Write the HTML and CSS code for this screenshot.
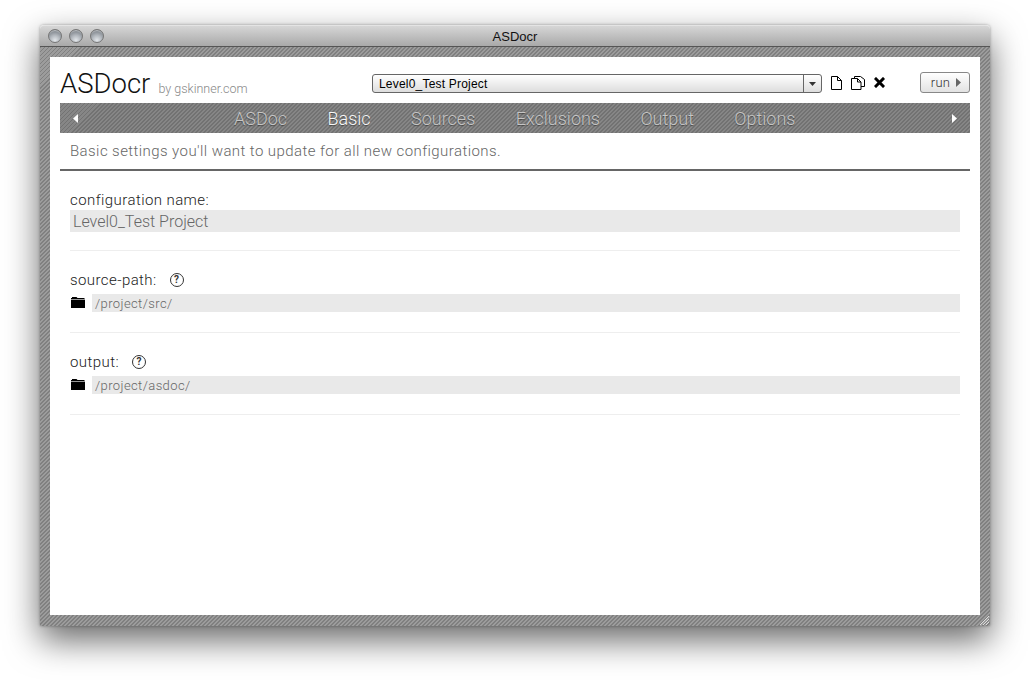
FILE: index.html
```html
<!DOCTYPE html>
<html lang="en">
<head>
<meta charset="utf-8">
<title>ASDocr</title>
<link rel="stylesheet" href="styles.css">
</head>
<body>
<div class="window">
  <div class="titlebar">
    <div class="lights"><span class="light"></span><span class="light"></span><span class="light"></span></div>
    <div class="wintitle">ASDocr</div>
  </div>
  <div class="frame">
    <div class="content">
      <header class="head">
        <div class="brand"><span class="logo">ASDocr</span><span class="by">by gskinner.com</span></div>
        <div class="tools">
          <div class="combo"><span class="combo-text">Level0_Test Project</span><span class="combo-btn"><svg width="7" height="4" viewBox="0 0 7 4"><path d="M0 0h7L3.500 4z" fill="#333"/></svg></span></div>
          <svg class="tool-new" width="11" height="14" viewBox="0 0 11 14"><path d="M.5.5h6l4 4v9H.5z" fill="#fff" stroke="#000"/><path d="M6.500.5v4h4" fill="none" stroke="#000"/></svg>
          <svg class="tool-copy" width="14" height="14" viewBox="0 0 14 14"><path d="M.5 2.500h6l3.500 3.500v7.500H.5z" fill="#fff" stroke="#000"/><path d="M6.500 2.500V6H10" fill="none" stroke="#000"/><path d="M3.500 2.500V.5h6l4 3v7H10" fill="none" stroke="#000"/></svg>
          <svg class="tool-del" width="11" height="11" viewBox="0 0 11 11"><path d="M2 2l7 7M9 2l-7 7" stroke="#000" stroke-width="3" stroke-linecap="square" fill="none"/></svg>
          <button class="run">run<svg width="5" height="9" viewBox="0 0 5 9"><path d="M0 0l5 4.500L0 9z" fill="#666"/></svg></button>
        </div>
      </header>
      <nav class="tabs">
        <svg class="arrow" width="5" height="9" viewBox="0 0 5 9"><path d="M5 0L0 4.500 5 9z" fill="#fff"/></svg>
        <div class="tablist">
          <span class="tab">ASDoc</span><span class="tab active">Basic</span><span class="tab">Sources</span><span class="tab">Exclusions</span><span class="tab">Output</span><span class="tab">Options</span>
        </div>
        <svg class="arrow" width="5" height="9" viewBox="0 0 5 9"><path d="M0 0l5 4.500L0 9z" fill="#fff"/></svg>
      </nav>
      <p class="desc">Basic settings you'll want to update for all new configurations.</p>
      <section class="fields">
        <div class="field first">
          <div class="label">configuration name:</div>
          <div class="input big">Level0_Test Project</div>
        </div>
        <div class="field">
          <div class="label">source-path:<span class="help">?</span></div>
          <div class="pathrow">
            <svg class="folder" width="14" height="12" viewBox="0 0 14 12"><path d="M0 2h1V1h4.500l1 1H13l1 1v9H0z" fill="#000"/><path d="M0 3.500h14" stroke="#fff" stroke-width=".6"/></svg>
            <div class="input small">/project/src/</div>
          </div>
        </div>
        <div class="field">
          <div class="label">output:<span class="help">?</span></div>
          <div class="pathrow">
            <svg class="folder" width="14" height="12" viewBox="0 0 14 12"><path d="M0 2h1V1h4.500l1 1H13l1 1v9H0z" fill="#000"/><path d="M0 3.500h14" stroke="#fff" stroke-width=".6"/></svg>
            <div class="input small">/project/asdoc/</div>
          </div>
        </div>
      </section>
    </div>
    <svg class="grip" width="10" height="10" viewBox="0 0 10 10"><path d="M10 1L1 10M10 4l-6 6M10 7l-3 3" stroke="#ddd" fill="none"/></svg>
  </div>
</div>
</body>
</html>
```
FILE: styles.css
```css
* { box-sizing: border-box; }
html, body { margin: 0; height: 100%; background: #fff; overflow: hidden; }
body { padding: 25px 40px 0; font-family: Roboto, "Liberation Sans", Arial, sans-serif; font-weight: 300; }
.window {
  width: 950px; height: 601px;
  display: flex; flex-direction: column;
  border-radius: 4px 4px 0 0;
  box-shadow: 0 14px 34px rgba(0,0,0,.6), 0 0 3px rgba(0,0,0,.35);
}
.titlebar {
  height: 22px; flex: none;
  display: flex; align-items: center; position: relative;
  background: linear-gradient(#d6d6d6, #a9a9a9);
  border-top: 1px solid #e4e4e4;
  border-bottom: 1px solid #555;
  border-radius: 4px 4px 0 0;
}
.lights { display: flex; gap: 7px; margin-left: 8px; }
.light {
  width: 14px; height: 14px; border-radius: 50%;
  border: 1px solid #777;
  background: radial-gradient(circle at 50% 85%, #e2e6ea 0, #b4b9bf 40%, #7f858c 80%), #999;
  box-shadow: inset 0 2px 1px -1px rgba(255,255,255,.5);
}
.wintitle {
  position: absolute; left: 0; right: 0; top: 3px;
  font-family: "Liberation Sans", Arial, sans-serif; font-weight: 400;
  text-align: center; font-size: 13px; line-height: 16px; color: #111;
}
.frame {
  flex: 1; min-height: 0; position: relative;
  padding: 10px 10px 11px;
  background: repeating-linear-gradient(135deg, #808080 0, #808080 1.4px, #9c9c9c 1.4px, #9c9c9c 2.83px);
}
.content {
  height: 100%; background: #fff; padding: 0 10px;
  display: flex; flex-direction: column;
}
.head { height: 46px; flex: none; display: flex; align-items: flex-end; justify-content: space-between; }
.brand { display: flex; align-items: baseline; margin-bottom: 3px; }
.logo { font-size: 27.5px; line-height: 32px; color: #111; }
.by { font-size: 12.5px; color: #888; margin-left: 8px; }
.tools { display: flex; align-items: flex-start; height: 21px; margin-bottom: 10px; }
.combo {
  width: 450px; height: 19px; margin-top: 2px; display: flex;
  border: 1px solid #666; border-radius: 3px;
  background: linear-gradient(#fff, #ddd);
}
.combo-text { flex: 1; font-family: "Liberation Sans", Arial, sans-serif; font-weight: 400; font-size: 12px; letter-spacing: .2px; line-height: 18px; padding-left: 6px; color: #000; }
.combo-btn { width: 18px; border-left: 1px solid #666; display: flex; align-items: center; justify-content: center; }
.tool-new { margin: 4px 0 0 9px; }
.tool-copy { margin: 4px 0 0 9px; }
.tool-del { margin: 5px 0 0 9px; }
.run {
  width: 50px; height: 21px; margin-left: 35px; padding: 0 0 0 2px;
  border: 1px solid #888; border-radius: 3px;
  background: linear-gradient(#fff, #e2e2e2);
  font: 300 13px Roboto, Arial, sans-serif; letter-spacing: .2px; color: #333;
  display: flex; align-items: center; justify-content: center; gap: 6px;
}
.tabs {
  height: 30px; flex: none; display: flex; align-items: center;
  padding: 0 13px;
  background: repeating-linear-gradient(135deg, #727272 0, #727272 1.4px, #868686 1.4px, #868686 2.83px);
}
.tablist { display: flex; gap: 40.4px; margin-left: 156px; margin-right: auto; }
.tab { font-size: 18px; color: #c6c6c6; text-shadow: 0 1px 1px rgba(0,0,0,.4); }
.tab.active { color: #f8f8f8; }
.desc {
  margin: 0; height: 38px; flex: none; padding: 9px 10px 0;
  font-size: 15px; line-height: 18px; color: #666; letter-spacing: .42px;
  border-bottom: 2px solid #666;
}
.fields { padding: 0 10px; }
.field { height: 82px; padding-top: 20px; border-bottom: 1px solid #eee; }
.field.first { height: 80px; }
.label { font-size: 15px; line-height: 18px; color: #222; display: flex; align-items: center; letter-spacing: .42px; }
.help {
  width: 14px; height: 14px; margin-left: 13px;
  border: 1px solid #333; border-radius: 50%;
  font-size: 10px; line-height: 12px; text-align: center; font-weight: 700; color: #333;
  letter-spacing: 0;
}
.input { background: #e9e9e9; color: #666; }
.big { height: 22px; margin-top: 1px; padding-left: 3px; font-size: 16px; line-height: 23px; }
.pathrow { display: flex; align-items: center; margin-top: 5px; }
.folder { flex: none; margin: 0 7px 3px 1px; }
.small { flex: 1; height: 18px; padding-left: 3px; font-size: 13px; line-height: 19px; letter-spacing: .4px; }
.grip { position: absolute; right: 1px; bottom: 1px; }
```
